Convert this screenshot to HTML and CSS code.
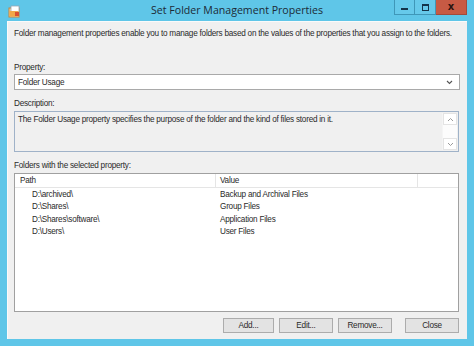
FILE: index.html
```html
<!DOCTYPE html>
<html>
<head>
<meta charset="utf-8">
<link rel="stylesheet" href="styles.css">
</head>
<body>
<div class="window">
  <div class="titlebar">
    <div class="tb-left">
      <svg class="app-icon" width="13" height="13" viewBox="0 0 13 13">
        <rect x="1" y="3" width="10" height="9" fill="#f3d9a6" stroke="#c9833a" stroke-width="1"/>
        <rect x="3" y="1" width="8" height="6" fill="#ffffff" stroke="#9aa7b5" stroke-width="0.8"/>
        <rect x="1.5" y="6" width="9" height="5.5" fill="#f0a848"/>
        <rect x="7" y="7" width="4" height="4" fill="#d9502f"/>
      </svg>
    </div>
    <div class="title">Set Folder Management Properties</div>
    <div class="tb-right">
      <div class="wbtn min"><span class="min-glyph"></span></div>
      <div class="wbtn max"><span class="max-glyph"></span></div>
      <div class="wbtn close"><span class="close-glyph">x</span></div>
    </div>
  </div>
  <div class="client">
    <div class="intro">Folder management properties enable you to manage folders based on the values of the properties that you assign to the folders.</div>
    <div class="label lbl-property">Property:</div>
    <div class="combo">
      <span class="combo-text">Folder Usage</span>
      <svg class="chev" width="7" height="5" viewBox="0 0 7 5"><path d="M1 1 L3.5 3.5 L6 1" fill="none" stroke="#555" stroke-width="1.1"/></svg>
    </div>
    <div class="label lbl-desc">Description:</div>
    <div class="desc">
      <div class="desc-text">The Folder Usage property specifies the purpose of the folder and the kind of files stored in it.</div>
      <div class="vscroll">
        <div class="sb-arrow"><svg width="7" height="5" viewBox="0 0 7 5"><path d="M1 4 L3.5 1.5 L6 4" fill="none" stroke="#9a9a9a" stroke-width="1"/></svg></div>
        <div class="sb-track"></div>
        <div class="sb-arrow"><svg width="7" height="5" viewBox="0 0 7 5"><path d="M1 1 L3.5 3.5 L6 1" fill="none" stroke="#9a9a9a" stroke-width="1"/></svg></div>
      </div>
    </div>
    <div class="label lbl-folders">Folders with the selected property:</div>
    <div class="list">
      <div class="list-head">
        <div class="hcol c-path">Path</div>
        <div class="hcol c-value">Value</div>
        <div class="hcol c-rest"></div>
      </div>
      <div class="row"><div class="cell c-path">D:\archived\</div><div class="cell c-value">Backup and Archival Files</div></div>
      <div class="row"><div class="cell c-path">D:\Shares\</div><div class="cell c-value">Group Files</div></div>
      <div class="row"><div class="cell c-path">D:\Shares\software\</div><div class="cell c-value">Application Files</div></div>
      <div class="row"><div class="cell c-path">D:\Users\</div><div class="cell c-value">User Files</div></div>
    </div>
    <div class="buttons">
      <div class="btn btn-add">Add...</div>
      <div class="btn">Edit...</div>
      <div class="btn">Remove...</div>
      <div class="btn btn-close">Close</div>
    </div>
  </div>
</div>
</body>
</html>
```

FILE: styles.css
```css
html, body {
  margin: 0;
  padding: 0;
  background: #5fc6e8;
}
.window {
  width: 474px;
  height: 346px;
  background: #5fc6e8;
  display: flex;
  flex-direction: column;
  font-family: "Liberation Sans", Arial, sans-serif;
  color: #2a2a2a;
}
.titlebar {
  height: 20px;
  display: grid;
  grid-template-columns: 1fr auto 1fr;
  align-items: start;
}
.tb-left {
  padding: 5px 0 0 8px;
}
.app-icon { display: block; }
.title {
  font-family: "Open Sans", "Noto Sans", sans-serif;
  font-size: 10.6px;
  line-height: 20px;
  color: #1c2a36;
  white-space: nowrap;
}
.tb-right {
  display: flex;
  justify-content: flex-end;
  padding-right: 7px;
}
.wbtn {
  height: 15px;
  display: flex;
  align-items: center;
  justify-content: center;
  box-sizing: border-box;
}
.min, .max {
  width: 21px;
  border: 1px solid #3f97b8;
  border-top: none;
  background: #66c9ea;
}
.max { border-left: none; }
.close {
  width: 31px;
  background: #c75a44;
  border: 1px solid #a24a3c;
  border-top: none;
  border-left: none;
}
.min-glyph {
  display: block;
  width: 7px;
  height: 2px;
  background: #14344a;
  margin-top: 3px;
}
.max-glyph {
  display: block;
  width: 5px;
  height: 4px;
  border: 1px solid #14344a;
  border-top-width: 2px;
}
.close-glyph {
  font-family: "DejaVu Sans", sans-serif;
  font-weight: bold;
  font-size: 10px;
  line-height: 10px;
  color: #2a1410;
}
.client {
  flex: 1;
  margin: 1px 7px 7px 7px;
  background: #f0f0f0;
  border-top: 1px solid #fafafa;
  border-left: 1px solid #fafafa;
  padding: 0 7px 0 6px;
  display: flex;
  flex-direction: column;
  font-size: 8.2px;
  letter-spacing: -0.24px;
}
.intro {
  margin-top: 6px;
  line-height: 11px;
  white-space: nowrap;
}
.label {
  line-height: 11px;
}
.lbl-property { margin-top: 23px; }
.lbl-desc { margin-top: 8px; }
.lbl-folders { margin-top: 8px; }
.combo {
  margin-top: 1px;
  height: 16px;
  box-sizing: border-box;
  border: 1px solid #a9a9a9;
  background: #fff;
  display: flex;
  align-items: center;
  padding: 0 6px 0 3px;
}
.combo-text { flex: 1; }
.chev { display: block; }
.desc {
  margin-top: 2px;
  height: 41px;
  margin-right: 1px;
  box-sizing: border-box;
  border: 1px solid #9fb2c8;
  background: #f0f0f0;
  display: flex;
}
.desc-text {
  flex: 1;
  padding: 2px 3px;
  line-height: 11px;
}
.vscroll {
  width: 14px;
  display: flex;
  flex-direction: column;
  background: #fff;
  border-left: 1px solid #f5f5f5;
  margin: 1px 1px 1px 0;
}
.sb-arrow {
  height: 12px;
  display: flex;
  align-items: center;
  justify-content: center;
  background: #fff;
  border: 1px solid #e4e4e4;
  box-sizing: border-box;
}
.sb-track { flex: 1; background: #fcfcfc; }
.list {
  margin-top: 2px;
  height: 139px;
  margin-right: 1px;
  box-sizing: border-box;
  border: 1px solid #a0a0a0;
  background: #fff;
}
.list-head {
  height: 13px;
  display: flex;
  border-bottom: 1px solid #e5e5e5;
  line-height: 13px;
  margin-bottom: 1px;
}
.hcol {
  box-sizing: border-box;
  border-right: 1px solid #e5e5e5;
}
.c-path { width: 201px; padding-left: 5px; box-sizing: border-box; }
.c-value { width: 202px; padding-left: 4px; box-sizing: border-box; }
.c-rest { flex: 1; border-right: none; }
.row {
  display: flex;
  height: 12.4px;
  line-height: 12.4px;
}
.row .c-path { padding-left: 17px; }
.buttons {
  margin-top: 6px;
  display: flex;
  justify-content: flex-end;
  gap: 5px;
  padding-right: 1px;
}
.btn {
  width: 54px;
  height: 15px;
  box-sizing: border-box;
  border: 1px solid #acacac;
  background: #e3e3e3;
  text-align: center;
  line-height: 13px;
}
.btn-add { width: 51px; }
.btn-close { margin-left: 8px; }
```
